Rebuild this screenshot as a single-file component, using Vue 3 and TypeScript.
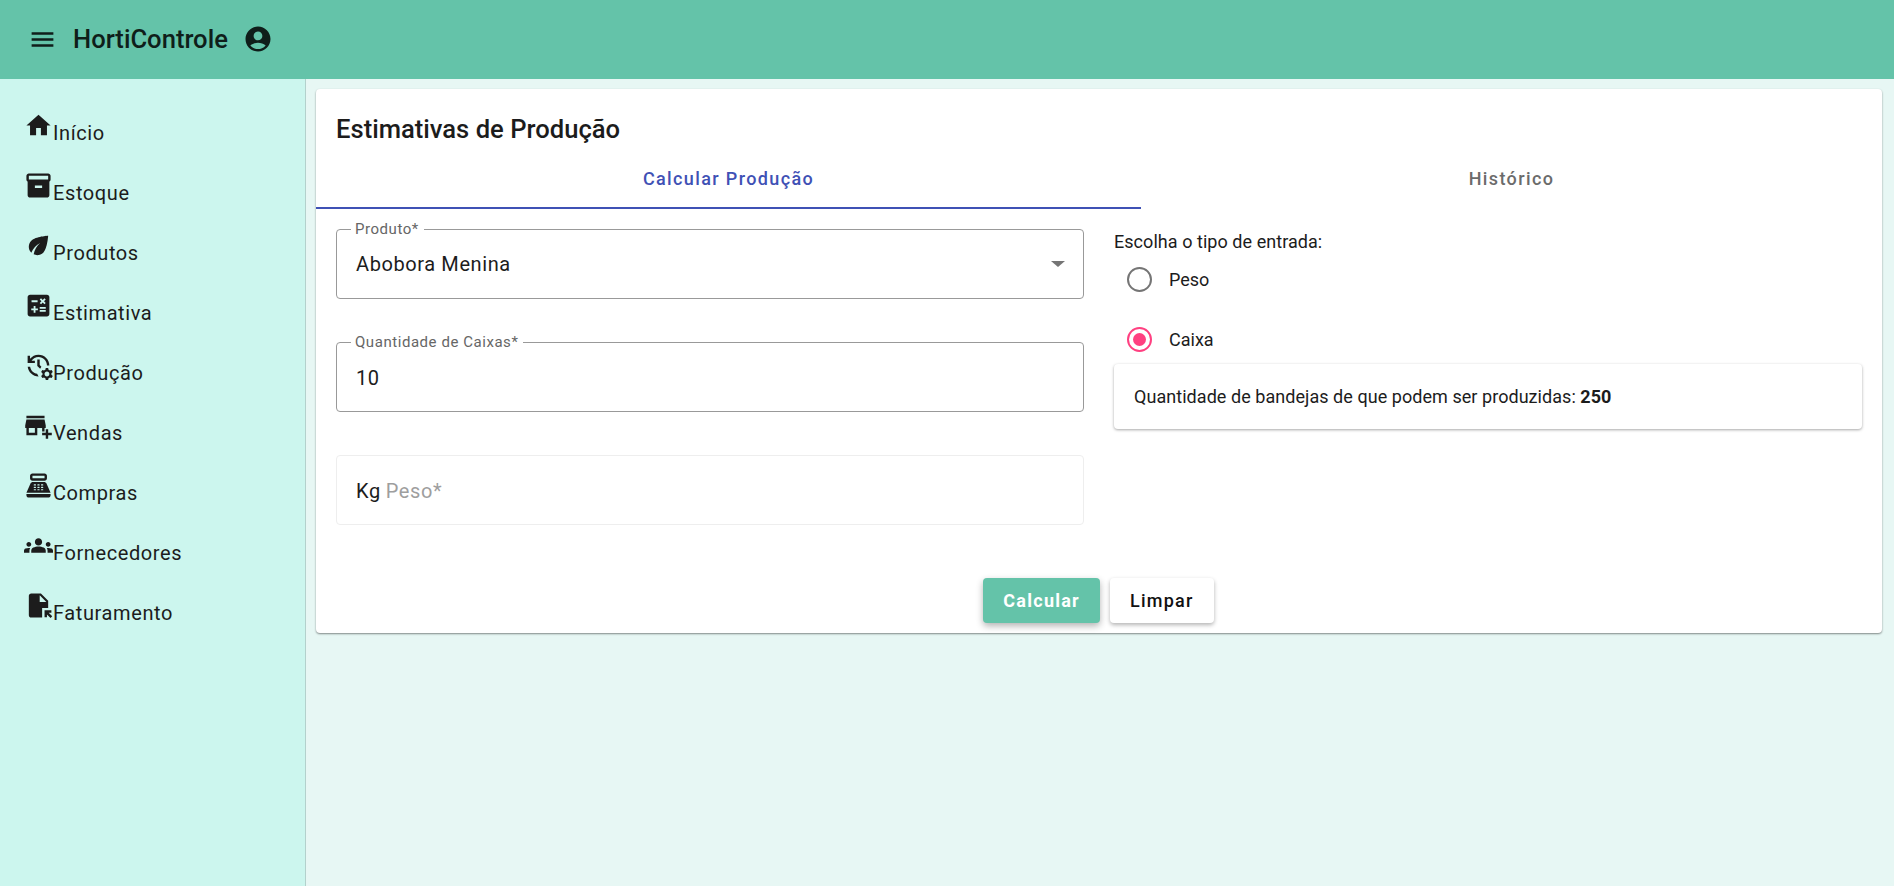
<script setup lang="ts">
interface NavItem { label: string; path: string }
const nav: NavItem[] = [
  { label: 'Início', path: 'M10 20v-6h4v6h5v-8h3L12 3 2 12h3v8z' },
  { label: 'Estoque', path: 'M20 2H4c-1 0-2 .9-2 2v3.01c0 .72.43 1.34 1 1.69V20c0 1.1 1.1 2 2 2h14c.9 0 2-.9 2-2V8.7c.57-.35 1-.97 1-1.69V4c0-1.1-1-2-2-2zm-5 12H9v-2h6v2zm5-7H4V4l16-.02V7z' },
  { label: 'Produtos', path: 'M6.05 8.05c-2.73 2.73-2.73 7.15-.02 9.88 1.47-3.4 4.09-6.24 7.36-7.93-2.77 2.34-4.71 5.61-5.39 9.32 2.6 1.23 5.8.78 7.95-1.37C19.43 14.47 20 4 20 4S9.53 4.57 6.05 8.05z' },
  { label: 'Estimativa', path: 'M19 3H5c-1.1 0-2 .9-2 2v14c0 1.1.9 2 2 2h14c1.1 0 2-.9 2-2V5c0-1.1-.9-2-2-2zm-5.97 4.06L14.09 6l1.41 1.41L16.91 6l1.06 1.06-1.41 1.41 1.41 1.41-1.06 1.06-1.41-1.4-1.41 1.41-1.06-1.06 1.41-1.41-1.41-1.42zm-6.78.66h5v1.5h-5v-1.5zM11.5 16h-2v2H8v-2H6v-1.5h2v-2h1.5v2h2V16zm6.5 1.25h-5v-1.5h5v1.5zm0-2.5h-5v-1.5h5v1.5z' },
  { label: 'Produção', path: 'M22.69 18.37l1.14-1-1-1.73-1.45.49c-.32-.27-.68-.48-1.08-.63L20 14h-2l-.3 1.49c-.4.15-.76.36-1.08.63l-1.45-.49-1 1.73 1.14 1c-.08.5-.08.76 0 1.26l-1.14 1 1 1.73 1.45-.49c.32.27.68.48 1.08.63L18 24h2l.3-1.49c.4-.15.76-.36 1.08-.63l1.45.49 1-1.73-1.14-1c.08-.51.08-.77 0-1.27zM19 21c-1.1 0-2-.9-2-2s.9-2 2-2 2 .9 2 2-.9 2-2 2zM11 7v5.41l2.36 2.36 1.04-1.79-1.4-1.39V7h-2zm10 5c0-4.97-4.03-9-9-9-2.83 0-5.35 1.32-7 3.36V4H3v6h6V8H6.26C7.53 6.19 9.63 5 12 5c3.86 0 7 3.14 7 7h2zm-10.14 6.91c-2.99-.49-5.35-2.9-5.78-5.91H3.06c.5 4.5 4.31 8 8.94 8h.07l-1.21-2.09z' },
  { label: 'Vendas', path: 'M15 17h2v-3h1v-2l-1-5H2l-1 5v2h1v6h9v-6h4v3zm-6 1H4v-4h5v4zM2 4h15v2H2zM20 18v-3h-2v3h-3v2h3v3h2v-3h3v-2z' },
  { label: 'Compras', path: 'M17 2H7c-1.1 0-2 .9-2 2v2c0 1.1.9 2 2 2h10c1.1 0 2-.9 2-2V4c0-1.1-.9-2-2-2zm0 4H7V4h10v2zm3 16H4c-1.1 0-2-.9-2-2v-1h20v1c0 1.1-.9 2-2 2zm-1.47-11.81C18.21 9.47 17.49 9 16.7 9H7.3c-.79 0-1.51.47-1.83 1.19L2 18h20l-3.47-7.81zM9.5 16h-1c-.28 0-.5-.22-.5-.5s.22-.5.5-.5h1c.28 0 .5.22.5.5s-.22.5-.5.5zm0-2h-1c-.28 0-.5-.22-.5-.5s.22-.5.5-.5h1c.28 0 .5.22.5.5s-.22.5-.5.5zm0-2h-1c-.28 0-.5-.22-.5-.5s.22-.5.5-.5h1c.28 0 .5.22.5.5s-.22.5-.5.5zm3 4h-1c-.28 0-.5-.22-.5-.5s.22-.5.5-.5h1c.28 0 .5.22.5.5s-.22.5-.5.5zm0-2h-1c-.28 0-.5-.22-.5-.5s.22-.5.5-.5h1c.28 0 .5.22.5.5s-.22.5-.5.5zm0-2h-1c-.28 0-.5-.22-.5-.5s.22-.5.5-.5h1c.28 0 .5.22.5.5s-.22.5-.5.5zm3 4h-1c-.28 0-.5-.22-.5-.5s.22-.5.5-.5h1c.28 0 .5.22.5.5s-.22.5-.5.5zm0-2h-1c-.28 0-.5-.22-.5-.5s.22-.5.5-.5h1c.28 0 .5.22.5.5s-.22.5-.5.5zm0-2h-1c-.28 0-.5-.22-.5-.5s.22-.5.5-.5h1c.28 0 .5.22.5.5s-.22.5-.5.5z' },
  { label: 'Fornecedores', path: 'M12 12.75c1.63 0 3.07.39 4.24.9 1.08.48 1.76 1.56 1.76 2.73V18H6v-1.61c0-1.18.68-2.26 1.76-2.73 1.17-.52 2.61-.91 4.24-.91zM4 13c1.1 0 2-.9 2-2s-.9-2-2-2-2 .9-2 2 .9 2 2 2zm1.13 1.1c-.37-.06-.74-.1-1.13-.1-.99 0-1.93.21-2.78.58C.48 14.9 0 15.62 0 16.43V18h4.5v-1.61c0-.83.23-1.61.63-2.29zM20 13c1.1 0 2-.9 2-2s-.9-2-2-2-2 .9-2 2 .9 2 2 2zm4 3.43c0-.81-.48-1.53-1.22-1.85-.85-.37-1.79-.58-2.78-.58-.39 0-.76.04-1.13.1.4.68.63 1.46.63 2.29V18H24v-1.57zM12 6c1.66 0 3 1.34 3 3s-1.34 3-3 3-3-1.34-3-3 1.34-3 3-3z' },
  { label: 'Faturamento', path: 'M14 2H6c-1.1 0-2 .9-2 2v16c0 1.1.89 2 1.99 2H15v-8h5V8l-6-6zm-1 7V3.5L18.5 9H13zm4 12.66V16h5.66v2h-2.24l2.95 2.95-1.41 1.41L19 19.41v2.24h-2z' },
]
</script>

<template>
  <div class="app">
    <header class="topbar">
      <svg class="menu" viewBox="0 0 24 24"><path d="M3 18h18v-2H3v2zm0-5h18v-2H3v2zm0-7v2h18V6H3z" /></svg>
      <span class="brand">HortiControle</span>
      <svg class="account" viewBox="0 0 24 24"><path d="M12 2C6.48 2 2 6.48 2 12s4.48 10 10 10 10-4.48 10-10S17.52 2 12 2zm0 4c1.93 0 3.5 1.57 3.5 3.5S13.93 13 12 13s-3.5-1.57-3.5-3.5S10.07 6 12 6zm0 14c-2.03 0-4.43-.82-6.14-2.88C7.55 15.8 9.68 15 12 15s4.45.8 6.14 2.12C16.43 19.18 14.03 20 12 20z" /></svg>
    </header>
    <div class="body">
      <nav class="sidebar">
        <a v-for="item in nav" :key="item.label" class="nav-item">
          <svg class="nav-icon" viewBox="0 0 24 24"><path :d="item.path" /></svg>
          <span class="nav-label">{{ item.label }}</span>
        </a>
      </nav>
      <main class="main">
        <section class="card">
          <h1 class="title">Estimativas de Produção</h1>
          <div class="tabs">
            <div class="tab active">Calcular Produção</div>
            <div class="tab">Histórico</div>
          </div>
          <div class="form">
            <div class="col left">
              <div class="field">
                <span class="legend">Produto*</span>
                <span class="value">Abobora Menina</span>
                <span class="caret"></span>
              </div>
              <div class="field">
                <span class="legend">Quantidade de Caixas*</span>
                <span class="value low">10</span>
              </div>
              <div class="field disabled">
                <span class="value low">Kg</span>
                <span class="placeholder low">Peso*</span>
              </div>
            </div>
            <div class="col right">
              <div class="radio-title">Escolha o tipo de entrada:</div>
              <div class="radios">
                <div class="radio">
                  <span class="circle"></span>
                  <span>Peso</span>
                </div>
                <div class="radio">
                  <span class="circle checked"><span class="dot"></span></span>
                  <span>Caixa</span>
                </div>
              </div>
              <div class="result">Quantidade de bandejas de que podem ser produzidas: <strong>250</strong></div>
            </div>
          </div>
          <div class="actions">
            <button class="btn primary">Calcular</button>
            <button class="btn">Limpar</button>
          </div>
        </section>
      </main>
    </div>
  </div>
</template>

<style>
html, body { margin: 0; padding: 0; }
</style>

<style scoped>
.app {
  width: 1894px;
  height: 886px;
  display: flex;
  flex-direction: column;
  overflow: hidden;
  font-family: Roboto, "Liberation Sans", sans-serif;
  color: #1c1c1c;
}
.topbar {
  height: 79px;
  flex: none;
  background: #64c3a9;
  display: flex;
  align-items: center;
  padding-left: 28px;
  box-sizing: border-box;
  color: #0f1e1a;
}
.topbar svg { fill: #0f1e1a; display: block; }
.menu { width: 29px; height: 29px; margin-top: -1px; }
.brand {
  margin-left: 16px;
  font-size: 25.6px;
  font-weight: 500;
  line-height: 32px;
  margin-top: -1px;
}
.account { width: 30px; height: 30px; margin-left: 15px; margin-top: -1px; }
.body { flex: 1; display: flex; min-height: 0; }
.sidebar {
  width: 306px;
  flex: none;
  box-sizing: border-box;
  background: #ccf6ee;
  border-right: 1px solid #b3d1cc;
  padding-top: 12px;
}
.nav-item {
  height: 60px;
  display: flex;
  align-items: flex-end;
  padding-left: 24px;
  font-size: 20px;
  letter-spacing: 0.6px;
  color: #1c1c1c;
}
.nav-icon { width: 29px; height: 29px; fill: #1c1c1c; flex: none; margin-bottom: 11px; }
.nav-label { line-height: 24px; margin-bottom: 6px; }
.main {
  flex: 1;
  background: #e7f7f4;
  padding: 10px 12px 10px 10px;
  box-sizing: border-box;
}
.card {
  background: #fff;
  border-radius: 4px;
  height: 544px;
  box-sizing: border-box;
  box-shadow: 0 1px 2px rgba(0, 0, 0, 0.45);
  display: flex;
  flex-direction: column;
}
.title {
  margin: 0;
  padding: 24px 20px 0;
  font-size: 25.6px;
  font-weight: 500;
  line-height: 32px;
  height: 58px;
  box-sizing: border-box;
  color: #1c1c1c;
}
.tabs { display: flex; height: 62px; flex: none; }
.tab {
  flex: 1;
  box-sizing: border-box;
  height: 62px;
  text-align: center;
  padding-top: 1px;
  line-height: 62px;
  font-size: 18px;
  font-weight: 500;
  letter-spacing: 1.37px;
  color: #6b6b6b;
  border-bottom: 2px solid transparent;
}
.tab.active { flex: none; width: 825px; color: #3f51b5; border-bottom-color: #3f51b5; }
.form {
  display: grid;
  grid-template-columns: 748px 748px;
  column-gap: 30px;
  padding: 20px 20px 0;
}
.col { display: flex; flex-direction: column; }
.left { gap: 43px; }
.field {
  position: relative;
  height: 70px;
  box-sizing: border-box;
  border: 1px solid #999;
  border-radius: 4px;
  display: flex;
  align-items: center;
  padding-left: 19px;
}
.field.disabled { border-color: #eee; }
.legend {
  position: absolute;
  left: 14px;
  top: -8px;
  padding: 0 5px 0 4px;
  background: #fff;
  font-size: 15px;
  line-height: 14px;
  letter-spacing: 0.55px;
  color: #666;
}
.value { font-size: 20px; letter-spacing: 0.6px; color: #1c1c1c; }
.placeholder { font-size: 20px; letter-spacing: 0.6px; color: #9e9e9e; margin-left: 5px; }
.low { padding-top: 1px; }
.caret {
  position: absolute;
  right: 18px;
  top: 31px;
  width: 0;
  height: 0;
  border-left: 7px solid transparent;
  border-right: 7px solid transparent;
  border-top: 6px solid #757575;
}
.radio-title { font-size: 18px; line-height: 24px; padding-top: 1px; letter-spacing: 0.05px; color: #1c1c1c; }
.radios { display: flex; flex-direction: column; gap: 10px; }
.radio {
  height: 50px;
  display: flex;
  align-items: center;
  padding-left: 13px;
  gap: 17px;
  font-size: 18px;
  color: #1c1c1c;
}
.circle {
  width: 25px;
  height: 25px;
  box-sizing: border-box;
  border: 2px solid #757575;
  border-radius: 50%;
  display: flex;
  align-items: center;
  justify-content: center;
}
.circle.checked { border-color: #ff4081; }
.dot { width: 13px; height: 13px; border-radius: 50%; background: #ff4081; }
.result {
  height: 65px;
  line-height: 66px;
  padding-left: 20px;
  font-size: 18px;
  letter-spacing: 0.05px;
  border-radius: 4px;
  box-shadow: 0 1px 3px rgba(0, 0, 0, 0.35);
  color: #1c1c1c;
}
.result strong { font-weight: 700; }
.actions {
  display: flex;
  justify-content: center;
  gap: 10px;
  margin-top: auto;
  padding: 0 1px 10px 0;
}
.btn {
  height: 45px;
  padding: 0 20px;
  font-family: inherit;
  font-size: 18px;
  font-weight: 500;
  letter-spacing: 1.25px;
  border: none;
  border-radius: 4px;
  background: #fff;
  color: #111;
  box-shadow: 0 2px 4px rgba(0, 0, 0, 0.3);
}
.btn.primary { background: #64c3a9; color: #fff; font-weight: 700; box-shadow: 0 3px 7px rgba(0, 0, 0, 0.3); }
</style>
